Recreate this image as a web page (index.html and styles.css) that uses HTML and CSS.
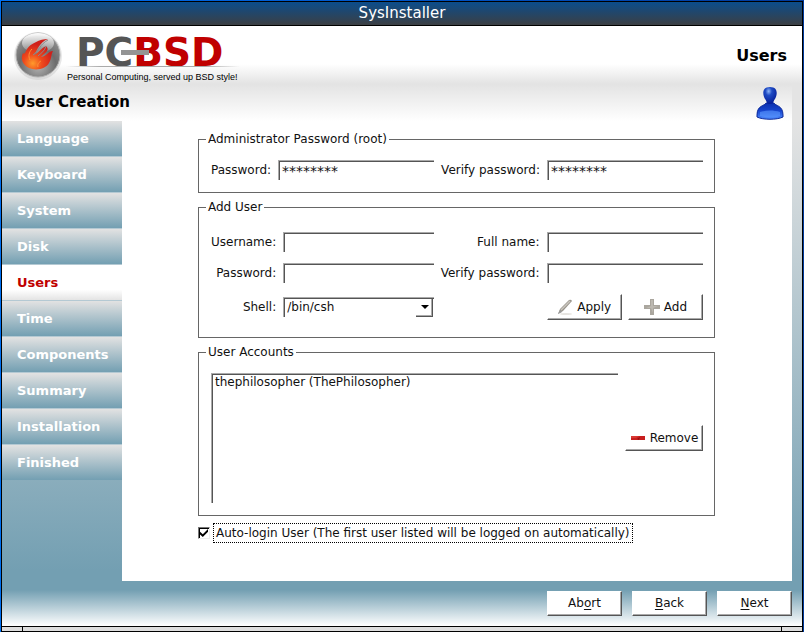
FILE: index.html
```html
<!DOCTYPE html>
<html lang="en">
<head>
  <meta charset="UTF-8" />
  <meta name="viewport" content="width=device-width, initial-scale=1.0"/>
  <title>SysInstaller</title>
  <link rel="stylesheet" href="styles.css">
</head>
<body>
  <div class="window">
    <div class="titlebar">SysInstaller</div>

    <div class="client">
      <header class="banner">
        <svg class="logo" width="260" height="58" viewBox="0 0 260 58" role="img" aria-label="PC-BSD">
          <defs>
            <radialGradient id="ball" cx="0.5" cy="0.75" r="0.75">
              <stop offset="0" stop-color="#b4b4b4" />
              <stop offset="0.55" stop-color="#6c6c6c" />
              <stop offset="0.9" stop-color="#8c8c8c" />
              <stop offset="1" stop-color="#d8d8d8" />
            </radialGradient>
            <linearGradient id="gloss" x1="0" y1="0" x2="0" y2="1">
              <stop offset="0" stop-color="#fff" stop-opacity="0.95" />
              <stop offset="1" stop-color="#fff" stop-opacity="0.1" />
            </linearGradient>
            <radialGradient id="fire" cx="0.35" cy="0.8" r="0.65">
              <stop offset="0" stop-color="#ff9a2c" />
              <stop offset="0.45" stop-color="#ee4a1c" />
              <stop offset="1" stop-color="#cf1f1a" />
            </radialGradient>
            <linearGradient id="rule">
              <stop offset="0" stop-color="#aaa" stop-opacity="0" />
              <stop offset="0.2" stop-color="#aaa" />
              <stop offset="0.8" stop-color="#aaa" />
              <stop offset="1" stop-color="#aaa" stop-opacity="0" />
            </linearGradient>
          </defs>
          <!-- Flame ball -->
          <circle cx="36" cy="30" r="24" fill="#bbb" opacity="0.35" />
          <circle cx="36" cy="29" r="22" fill="url(#ball)" stroke="#b0b0b0" />
          <ellipse cx="36" cy="17" rx="16" ry="10" fill="url(#gloss)" />
          <path d="M46 13C38 13 28 18 25 23C23 26 23 29 21 27C18 33 21 39 27 42C34 45 44 43 47 37C50 32 49 28 51 25C46 25 45 30 39 31C44 26 48 24 44 20C39 22 37 27 32 29C36 23 37 17 46 13Z" fill="url(#fire)" />
          <path d="M30 23C27 26 26 30 28 34M39 35C37 36 35 38 36 41" fill="none" stroke="#ff9038" stroke-width="1" />
          <path d="M46 14C38 18 37 25 31 29M44 20C43 25 39 27 36 30" fill="none" stroke="#8a8a8a" stroke-width="1" />
          <!-- Wordmark -->
          <text class="wordmark" x="74" y="40"><tspan fill="#555">PC</tspan><tspan fill="#c00000">BSD</tspan></text>
          <rect x="119" y="24" width="28" height="5" fill="#949494" />
          <rect x="64" y="40" width="174" height="1" fill="url(#rule)" />
          <text class="tagline" x="65" y="54">Personal Computing, served up BSD style!</text>
        </svg>
        <div class="step-name">Users</div>
      </header>

      <div class="subheader">
        <h1>User Creation</h1>
        <svg class="person" width="28" height="34" viewBox="0 0 28 34" aria-hidden="true">
          <defs>
            <linearGradient id="body" x1="0" y1="0" x2="0" y2="1">
              <stop offset="0" stop-color="#0a2fae" />
              <stop offset="0.5" stop-color="#1746cf" />
              <stop offset="1" stop-color="#4f8cff" />
            </linearGradient>
            <radialGradient id="head" cx="0.4" cy="0.25" r="0.7">
              <stop offset="0" stop-color="#8db4f8" />
              <stop offset="0.35" stop-color="#1f4bc4" />
              <stop offset="1" stop-color="#06209a" />
            </radialGradient>
          </defs>
          <path d="M10 17C9 20 1 19 1 29V31C7 34 21 34 27 31V29C27 19 19 20 18 17Z" fill="url(#body)" stroke="#0a2798" />
          <path d="M14 1C5 1 7 10 9 13C11 15 10 18 14 18C18 18 17 15 19 13C21 10 23 1 14 1Z" fill="url(#head)" />
          <path d="M4 26C10 24 18 24 24 26V30C18 32 10 32 4 30Z" fill="#5c9aff" opacity="0.6" />
        </svg>
      </div>

      <div class="middle">
        <nav class="steps">
          <a href="#language">Language</a>
          <a href="#keyboard">Keyboard</a>
          <a href="#system">System</a>
          <a href="#disk">Disk</a>
          <a href="#users" class="current" aria-current="step">Users</a>
          <a href="#time">Time</a>
          <a href="#components">Components</a>
          <a href="#summary">Summary</a>
          <a href="#installation">Installation</a>
          <a href="#finished">Finished</a>
        </nav>

        <main class="panel">
          <fieldset>
            <legend>Administrator Password (root)</legend>
            <div class="fields root-fields">
              <label for="root-pass">Password:</label>
              <input class="field" id="root-pass" type="text" value="********">
              <label for="root-verify">Verify password:</label>
              <input class="field" id="root-verify" type="text" value="********">
            </div>
          </fieldset>

          <fieldset>
            <legend>Add User</legend>
            <div class="fields user-fields">
              <label for="username">Username:</label>
              <input class="field" id="username" type="text">
              <label for="fullname">Full name:</label>
              <input class="field" id="fullname" type="text">
              <label for="user-pass">Password:</label>
              <input class="field" id="user-pass" type="password">
              <label for="user-verify">Verify password:</label>
              <input class="field" id="user-verify" type="password">
              <label for="shell">Shell:</label>
              <div class="combo">
                <select class="field" id="shell">
                  <option>/bin/csh</option>
                </select>
              </div>
              <div class="user-buttons">
                <button type="button" class="btn">
                  <svg width="16" height="16" viewBox="0 0 16 16" aria-hidden="true">
                    <ellipse cx="9" cy="15" rx="6" ry="1" fill="#e6e4e0" />
                    <path d="M1 15L3 10L12 1Q14 0 15 2L6 12Z" fill="#98948c" />
                    <path d="M4 11L13 2" stroke="#c9c5be" stroke-width="1.5" />
                    <path d="M1 15L3 11L5 13Z" fill="#999" />
                  </svg>
                  Apply
                </button>
                <button type="button" class="btn">
                  <svg width="16" height="16" viewBox="0 0 16 16" aria-hidden="true">
                    <path d="M6 0H10V6H16V10H10V16H6V10H0V6H6Z" fill="#aaa69e" />
                    <path d="M7 1H9V7H14L9 9V14L7 9H2L7 7Z" fill="#bcb8b0" />
                  </svg>
                  Add
                </button>
              </div>
            </div>
          </fieldset>

          <fieldset>
            <legend>User Accounts</legend>
            <div class="accounts">
              <select class="field account-list" size="7" aria-label="User Accounts">
                <option>thephilosopher (ThePhilosopher)</option>
              </select>
              <button type="button" class="btn">
                <svg width="16" height="16" viewBox="0 0 16 16" aria-hidden="true">
                  <rect x="1" y="6" width="14" height="4" fill="#c81e1e" />
                  <path d="M1 6H9L6 8H1Z" fill="#d83a34" />
                  <path d="M7 9L10 7L9 10Z" fill="#8e1010" />
                </svg>
                Remove
              </button>
            </div>
          </fieldset>

          <div class="autologin">
            <input type="checkbox" id="autologin" checked>
            <label for="autologin">Auto-login User (The first user listed will be logged on automatically)</label>
          </div>
        </main>
      </div>

      <footer class="actions">
        <button type="button" class="btn">Ab<u>o</u>rt</button>
        <button type="button" class="btn"><u>B</u>ack</button>
        <button type="button" class="btn"><u>N</u>ext</button>
      </footer>
    </div>

    <div class="grip"><span></span><span></span></div>
  </div>
</body>
</html>
```
FILE: styles.css
```css
* {
  box-sizing: border-box;
}

body {
  margin: 0;
  font-family: "DejaVu Sans", sans-serif;
  font-size: 12px;
  line-height: 15px;
  color: #111;
  background: linear-gradient(to right, #0070f0, #003a9c);
}

.window {
  display: flex;
  flex-direction: column;
  min-height: 100vh;
  padding: 1px 1px 0;
}

.titlebar {
  height: 25px;
  border: 1px solid #000;
  background: linear-gradient(#0b4d8c, #3c3f43);
  color: #fff;
  font-size: 15px;
  line-height: 23px;
  text-align: center;
}

.client {
  flex: 1;
  display: flex;
  flex-direction: column;
  border: solid #000;
  border-width: 0 1px;
  background: linear-gradient(#e4e4e4 58px, #e4e4e4 95px, #739fb2 545px, #739fb2 564px, #fff 600px);
}

/* Header */

.banner {
  display: flex;
  justify-content: space-between;
  align-items: center;
  height: 58px;
  padding-right: 15px;
  background: linear-gradient(#fff 38px, #e3e3e3);
}

.logo {
  display: block;
}

.wordmark {
  font-size: 39px;
  font-weight: bold;
}

.tagline {
  font-family: "Liberation Sans", sans-serif;
  font-size: 9px;
  fill: #000;
}

.step-name {
  font-size: 16px;
  font-weight: bold;
  color: #000;
}

.subheader {
  display: flex;
  justify-content: space-between;
  align-items: center;
  height: 37px;
  margin-right: 10px;
  padding: 0 8px 0 12px;
  background: linear-gradient(#e3e3e3, #fff);
}

h1 {
  margin: 0;
  font-size: 15px;
  color: #000;
}

/* Sidebar and page */

.middle {
  flex: 1;
  display: flex;
  margin-right: 10px;
}

.steps {
  width: 120px;
}

.steps a {
  display: block;
  height: 36px;
  padding-left: 15px;
  border-bottom: 1px solid #b4c9d3;
  background: linear-gradient(#e2e2e2, #739fb2);
  color: #fff;
  font-size: 13px;
  font-weight: bold;
  line-height: 35px;
  text-decoration: none;
}

.steps a:last-child {
  height: 35px;
  border-bottom: 0;
}

.steps a.current {
  background: linear-gradient(#fff 70%, #e4e4e4);
  color: #c00000;
}

.panel {
  flex: 1;
  display: flex;
  flex-direction: column;
  gap: 7px;
  padding: 11px 77px 36px 76px;
  background: #fff;
}

fieldset {
  min-width: 0;
  margin: 0;
  padding: 0 11px 0 7px;
  border: 1px solid #666;
}

legend {
  padding: 0 2px;
}

.fields {
  display: grid;
  align-items: center;
  column-gap: 7px;
  padding-left: 5px;
}

.fields label {
  text-align: right;
  white-space: nowrap;
}

.root-fields {
  grid-template-columns: auto 1fr auto 1fr;
  padding-top: 13px;
  padding-bottom: 12px;
}

.user-fields {
  grid-template-columns: auto 149fr auto 155fr;
  row-gap: 11px;
  padding-top: 17px;
  padding-bottom: 17px;
}

/* Sunken edge on the top and left only */
.field {
  width: 100%;
  min-width: 0;
  height: 20px;
  padding: 1px 3px;
  border: solid #aaa;
  border-width: 1px 0 0 1px;
  border-radius: 0;
  box-shadow: inset 1px 1px #555;
  background: #fff;
  color: #111;
  font: inherit;
  outline: none;
}

.root-fields .field {
  font-size: 14px;
}

.combo {
  position: relative;
}

.combo .field {
  display: block;
  appearance: none;
}

/* Drop-down arrow button */
.combo::before {
  content: "";
  position: absolute;
  right: 1px;
  top: 2px;
  width: 16px;
  height: 17px;
  border: solid #555;
  border-width: 0 1px 1px 0;
  box-shadow: inset -1px -1px #aaa;
  pointer-events: none;
}

.combo::after {
  content: "";
  position: absolute;
  right: 5px;
  top: 8px;
  border: 4px solid transparent;
  border-top-color: #000;
  border-bottom: 0;
  pointer-events: none;
}

.user-buttons {
  grid-column: 4;
  display: flex;
  gap: 6px;
}

.user-buttons .btn {
  flex: 1;
}

/* Raised edge on the bottom and right */
.btn {
  display: flex;
  justify-content: center;
  align-items: center;
  gap: 4px;
  height: 26px;
  padding: 0;
  border: 1px solid;
  border-color: #fff #555 #555 #fff;
  box-shadow: inset -1px -1px #aaa;
  background: #fff;
  color: #111;
  font: inherit;
}

.accounts {
  display: flex;
  align-items: center;
  gap: 7px;
  padding: 13px 0 12px 5px;
}

.account-list {
  flex: 1;
  height: 130px;
  overflow: hidden;
}

.account-list option {
  padding: 0;
}

.accounts .btn {
  width: 78px;
}

.autologin {
  display: flex;
  align-items: center;
  gap: 3px;
}

.autologin input {
  appearance: none;
  display: grid;
  place-items: center;
  width: 12px;
  height: 12px;
  margin: 0;
  border: 1px solid;
  border-color: #777 #eee #eee #777;
  outline: none;
  box-shadow: inset 1px 1px #000;
}

.autologin input:checked::before {
  content: "";
  width: 8px;
  height: 8px;
  background: #000;
  clip-path: polygon(0 35%, 35% 65%, 100% 0, 100% 35%, 35% 100%, 0 70%);
}

.autologin label {
  padding: 2px 2px 1px;
  border: 1px dotted #000;
  white-space: nowrap;
}

/* Bottom buttons */

.actions {
  display: flex;
  justify-content: flex-end;
  gap: 10px;
  padding: 10px 10px 10px 0;
}

.actions .btn {
  gap: 0;
  width: 75px;
  height: 25px;
}

.actions u {
  text-underline-offset: 2px;
}

.grip {
  display: flex;
  justify-content: space-between;
  height: 6px;
  padding: 0 20px;
  border: 1px solid #000;
  background: #ddd;
}

.grip span {
  width: 1px;
  background: #000;
}
```
